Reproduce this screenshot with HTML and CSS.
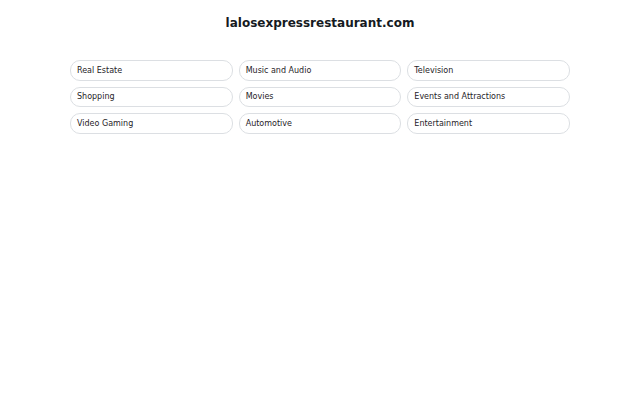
FILE: index.html
```html
<!DOCTYPE html>
<html>
<head>
<meta charset="utf-8">
<link rel="stylesheet" href="styles.css">
</head>
<body>
<div class="page">
  <h1 class="title">lalosexpressrestaurant.com</h1>
  <div class="grid">
    <a class="pill">Real Estate</a>
    <a class="pill">Music and Audio</a>
    <a class="pill">Television</a>
    <a class="pill">Shopping</a>
    <a class="pill">Movies</a>
    <a class="pill">Events and Attractions</a>
    <a class="pill">Video Gaming</a>
    <a class="pill">Automotive</a>
    <a class="pill">Entertainment</a>
  </div>
</div>
</body>
</html>
```
FILE: styles.css
```css
html, body {
  margin: 0;
  padding: 0;
  background: #ffffff;
}
.page {
  font-family: "DejaVu Sans", sans-serif;
  color: #1f2328;
  display: flex;
  flex-direction: column;
  align-items: center;
}
.title {
  margin: 15px 0 0 0;
  font-size: 12px;
  line-height: 16px;
  font-weight: bold;
  color: #161a22;
}
.grid {
  margin-top: 29px;
  width: 500px;
  display: grid;
  grid-template-columns: repeat(3, 1fr);
  column-gap: 6px;
  row-gap: 6px;
}
.pill {
  height: 20.5px;
  box-sizing: border-box;
  border: 1px solid #dcdfe3;
  border-radius: 10px;
  padding: 0 6px;
  display: flex;
  align-items: center;
  font-size: 8px;
  color: #1f2328;
}
```
